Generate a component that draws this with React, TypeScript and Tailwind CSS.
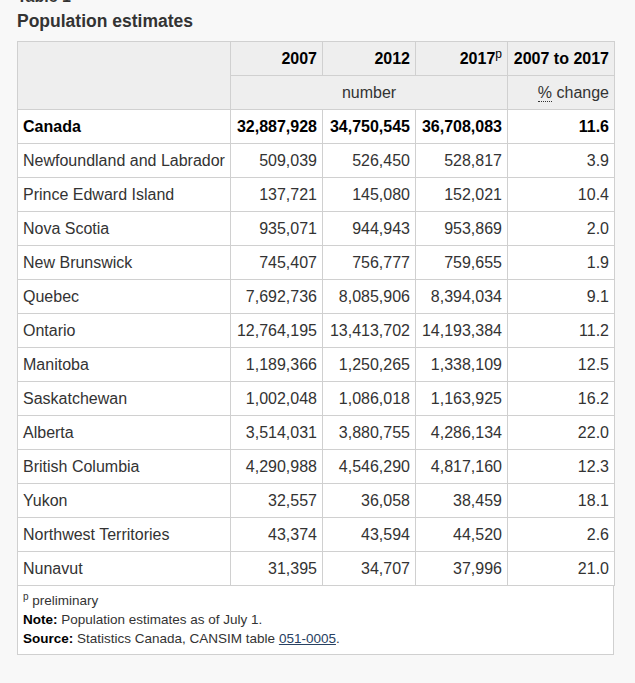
const rows: [string, string, string, string, string][] = [
  ["Newfoundland and Labrador", "509,039", "526,450", "528,817", "3.9"],
  ["Prince Edward Island", "137,721", "145,080", "152,021", "10.4"],
  ["Nova Scotia", "935,071", "944,943", "953,869", "2.0"],
  ["New Brunswick", "745,407", "756,777", "759,655", "1.9"],
  ["Quebec", "7,692,736", "8,085,906", "8,394,034", "9.1"],
  ["Ontario", "12,764,195", "13,413,702", "14,193,384", "11.2"],
  ["Manitoba", "1,189,366", "1,250,265", "1,338,109", "12.5"],
  ["Saskatchewan", "1,002,048", "1,086,018", "1,163,925", "16.2"],
  ["Alberta", "3,514,031", "3,880,755", "4,286,134", "22.0"],
  ["British Columbia", "4,290,988", "4,546,290", "4,817,160", "12.3"],
  ["Yukon", "32,557", "36,058", "38,459", "18.1"],
  ["Northwest Territories", "43,374", "43,594", "44,520", "2.6"],
  ["Nunavut", "31,395", "34,707", "37,996", "21.0"],
];

const cell = "border border-[#d0d0d0] px-[5px] py-[5px] leading-[23px]";

export default function App() {
  return (
    <div
      className="min-h-[683px] bg-[#f8f8f8] text-[#333] overflow-hidden pl-[17px]"
      style={{ fontFamily: '"Liberation Sans", Arial, sans-serif' }}
    >
      <div className="-mt-[12px] h-[21px] text-[16px] font-bold leading-[17px]">Table 1</div>
      <h2 className="text-[17.5px] font-bold leading-[24px] mb-[8px]">Population estimates</h2>

      <div className="w-[597px] bg-white">
        <table className="w-[597px] table-fixed border-collapse text-[16px]">
          <colgroup>
            <col className="w-[213px]" />
            <col className="w-[92px]" />
            <col className="w-[93px]" />
            <col className="w-[92px]" />
            <col className="w-[107px]" />
          </colgroup>
          <thead className="bg-[#eeeeee]">
            <tr>
              <th rowSpan={2} className={cell}></th>
              <th className={`${cell} text-right font-bold text-black`}>2007</th>
              <th className={`${cell} text-right font-bold text-black`}>2012</th>
              <th className={`${cell} text-right font-bold text-black`}>
                2017<sup className="text-[12px] font-normal">p</sup>
              </th>
              <th className={`${cell} text-right font-bold text-black whitespace-nowrap`}>2007 to 2017</th>
            </tr>
            <tr>
              <th colSpan={3} className={`${cell} text-center font-normal`}>number</th>
              <th className={`${cell} text-right font-normal`}>
                <abbr className="no-underline border-b border-dotted border-[#333]">%</abbr> change
              </th>
            </tr>
          </thead>
          <tbody>
            <tr className="font-bold text-black">
              <td className={cell}>Canada</td>
              <td className={`${cell} text-right`}>32,887,928</td>
              <td className={`${cell} text-right`}>34,750,545</td>
              <td className={`${cell} text-right`}>36,708,083</td>
              <td className={`${cell} text-right`}>11.6</td>
            </tr>
            {rows.map((r) => (
              <tr key={r[0]}>
                <td className={`${cell} whitespace-nowrap`}>{r[0]}</td>
                <td className={`${cell} text-right`}>{r[1]}</td>
                <td className={`${cell} text-right`}>{r[2]}</td>
                <td className={`${cell} text-right`}>{r[3]}</td>
                <td className={`${cell} text-right`}>{r[4]}</td>
              </tr>
            ))}
          </tbody>
        </table>
        <div className="border border-t-0 border-[#d0d0d0] px-[5px] pt-[5px] pb-[6px] text-[13.5px] leading-[19px]">
          <div>
            <sup className="text-[10px]">p</sup> preliminary
          </div>
          <div>
            <strong className="text-black">Note:</strong> Population estimates as of July 1.
          </div>
          <div>
            <strong className="text-black">Source:</strong> Statistics Canada, CANSIM table{" "}
            <a href="#" className="underline text-[#284162]">051-0005</a>.
          </div>
        </div>
      </div>
    </div>
  );
}
